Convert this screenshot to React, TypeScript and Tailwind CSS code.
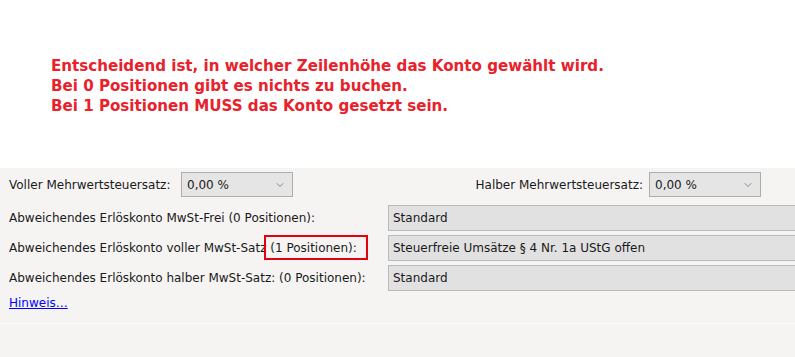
import { ChevronDown } from "lucide-react";

const LABEL_FONT = "font-['DejaVu_Sans',Verdana,sans-serif] text-[12px] text-[#1a1a1a]";

function Combo({ value }: { value: string }) {
    return (
        <div className="flex h-[25px] w-[112px] items-center justify-between border border-[#adadad] bg-[#e5e5e5] pl-[5px] pr-[6px]">
            <span className={LABEL_FONT}>{value}</span>
            <ChevronDown size={12} strokeWidth={1.3} className="text-[#555555]" />
        </div>
    );
}

function Field({ value }: { value: string }) {
    return (
        <div className="flex h-[26px] w-[440px] shrink-0 items-center border border-[#b9b9b9] bg-[#e1e1e1] pl-[4px]">
            <span className={LABEL_FONT}>{value}</span>
        </div>
    );
}

export default function App() {
    return (
        <div className="h-[357px] w-[795px] overflow-hidden bg-white">
            <div className="h-[168px] pl-[51px] pt-[56px] font-['DejaVu_Sans',Verdana,sans-serif] text-[15.1px] font-bold leading-[20px] text-[#e8212b]">
                <p>Entscheidend ist, in welcher Zeilenhöhe das Konto gewählt wird.</p>
                <p>Bei 0 Positionen gibt es nichts zu buchen.</p>
                <p>Bei 1 Positionen MUSS das Konto gesetzt sein.</p>
            </div>

            <div className="h-[189px] bg-[#f5f4f3]">
                <div className="h-[155px] pl-[9px] pt-[4px]">
                    <div className="flex items-center justify-between pr-[34px]">
                        <div className="flex items-center">
                            <span className={`${LABEL_FONT} w-[172px]`}>Voller Mehrwertsteuersatz:</span>
                            <Combo value="0,00 %" />
                        </div>
                        <div className="flex items-center gap-[6px]">
                            <span className={LABEL_FONT}>Halber Mehrwertsteuersatz:</span>
                            <Combo value="0,00 %" />
                        </div>
                    </div>

                    <div className="mt-[8px] flex flex-col gap-[4px]">
                        <div className="flex items-center">
                            <span className={`${LABEL_FONT} w-[379px] shrink-0`}>
                                Abweichendes Erlöskonto MwSt-Frei (0 Positionen):
                            </span>
                            <Field value="Standard" />
                        </div>
                        <div className="flex items-center">
                            <span className={`${LABEL_FONT} w-[379px] shrink-0`}>
                                Abweichendes Erlöskonto voller MwSt-Satz
                                <span className="relative">
                                    {" "}(1 Positionen):
                                    <span className="absolute -left-[2px] -top-[6px] h-[25px] w-[104px] border-2 border-[#e4000f]" />
                                </span>
                            </span>
                            <Field value="Steuerfreie Umsätze § 4 Nr. 1a UStG offen" />
                        </div>
                        <div className="flex items-center">
                            <span className={`${LABEL_FONT} w-[379px] shrink-0`}>
                                Abweichendes Erlöskonto halber MwSt-Satz: (0 Positionen):
                            </span>
                            <Field value="Standard" />
                        </div>
                    </div>

                    <a href="#" className="mt-[3px] block w-fit font-['DejaVu_Sans',Verdana,sans-serif] text-[12px] text-[#0000ff] underline">
                        Hinweis…
                    </a>
                </div>
                <div className="border-t border-[#fbfbfb]" />
            </div>
        </div>
    );
}
